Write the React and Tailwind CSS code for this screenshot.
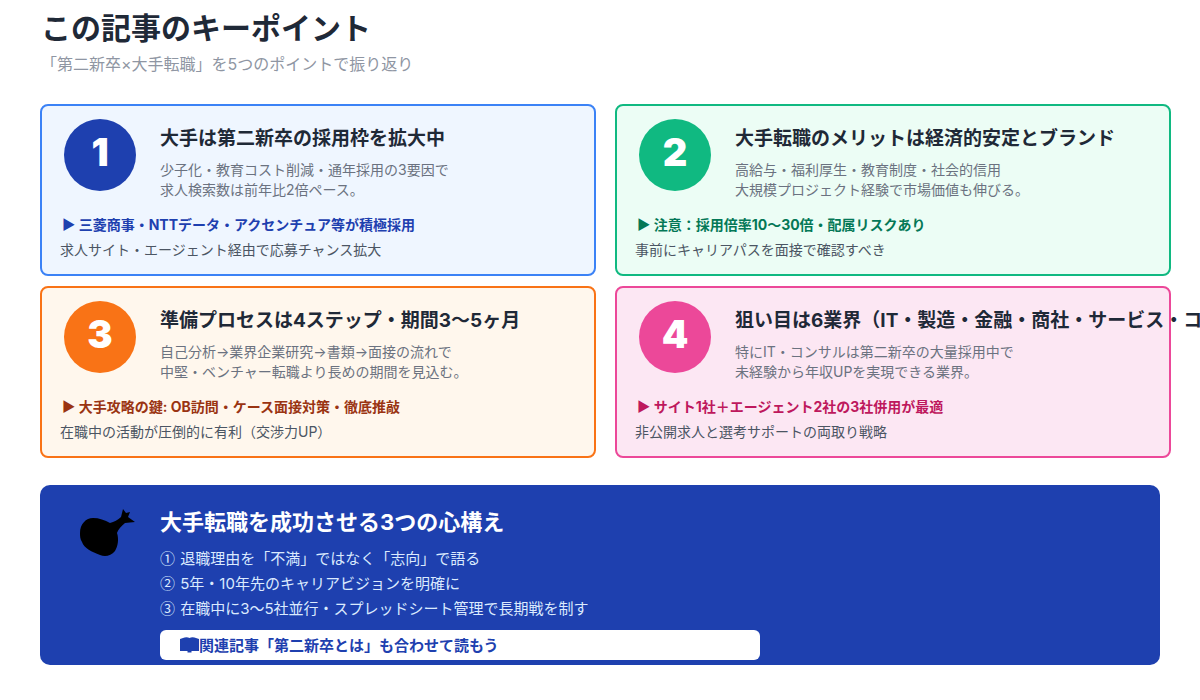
const font = { fontFamily: '"Inter", "Noto Sans CJK JP", sans-serif' };
const cjk = { fontFamily: '"Noto Sans CJK JP", sans-serif' };

const cards = [
  {
    n: "1",
    wrap: "border-[#3b82f6] bg-[#eff6ff]",
    circle: "bg-[#1e40af]",
    hl: "text-[#1e40af]",
    title: "大手は第二新卒の採用枠を拡大中",
    d1: "少子化・教育コスト削減・通年採用の3要因で",
    d2: "求人検索数は前年比2倍ペース。",
    h: "▶ 三菱商事・NTTデータ・アクセンチュア等が積極採用",
    note: "求人サイト・エージェント経由で応募チャンス拡大",
  },
  {
    n: "2",
    wrap: "border-[#10b981] bg-[#ecfdf5]",
    circle: "bg-[#10b981]",
    hl: "text-[#047857]",
    title: "大手転職のメリットは経済的安定とブランド",
    d1: "高給与・福利厚生・教育制度・社会的信用",
    d2: "大規模プロジェクト経験で市場価値も伸びる。",
    h: "▶ 注意：採用倍率10〜30倍・配属リスクあり",
    note: "事前にキャリアパスを面接で確認すべき",
  },
  {
    n: "3",
    wrap: "border-[#f97316] bg-[#fff7ed]",
    circle: "bg-[#f97316]",
    hl: "text-[#9a3412]",
    title: "準備プロセスは4ステップ・期間3〜5ヶ月",
    d1: "自己分析→業界企業研究→書類→面接の流れで",
    d2: "中堅・ベンチャー転職より長めの期間を見込む。",
    h: "▶ 大手攻略の鍵: OB訪問・ケース面接対策・徹底推敲",
    note: "在職中の活動が圧倒的に有利（交渉力UP）",
  },
  {
    n: "4",
    wrap: "border-[#ec4899] bg-[#fce7f3]",
    circle: "bg-[#ec4899]",
    hl: "text-[#be185d]",
    title: "狙い目は6業界（IT・製造・金融・商社・サービス・コンサル）",
    d1: "特にIT・コンサルは第二新卒の大量採用中で",
    d2: "未経験から年収UPを実現できる業界。",
    h: "▶ サイト1社＋エージェント2社の3社併用が最適",
    note: "非公開求人と選考サポートの両取り戦略",
  },
];

function Card({ c }) {
  return (
    <div className={`h-[172px] rounded-lg border-2 pl-[18px] pt-[13px] ${c.wrap}`}>
      <div className="flex">
        <div
          className={`ml-[4px] flex h-[72px] w-[72px] shrink-0 items-center justify-center rounded-full pb-[6px] text-[38px] font-black leading-none text-white ${c.circle}`}
        >
          {c.n}
        </div>
        <div className="ml-[24px] min-w-0">
          <div className="mt-[7px] whitespace-nowrap text-[19px] font-bold leading-[26px] text-[#1f2937]">
            {c.title}
          </div>
          <div className="mt-[8px] whitespace-nowrap text-[14px] leading-[20px] text-[#6b7280]">
            <div>{c.d1}</div>
            <div>{c.d2}</div>
          </div>
        </div>
      </div>
      <div className={`ml-[2px] mt-[15px] whitespace-nowrap text-[14px] font-bold leading-[20px] ${c.hl}`}>
        {c.h}
      </div>
      <div className="mt-[5px] whitespace-nowrap text-[14px] leading-[20px] text-[#4b5563]">{c.note}</div>
    </div>
  );
}

function Bomb() {
  return (
    <svg width="58" height="50" viewBox="0 0 58 50" className="mt-[1px] shrink-0">
      <path
        d="M0 24C0 15 6 9 13 9C19 9 25 11 30 14C34 13 38 11 41 8L43 0L46 4L50 3L48 8L55 13L45 14C41 17 38 21 37 24C39 30 38 37 35 42C31 47 25 48 20 46C12 43 4 39 2 33C0 30 0 27 0 24Z"
        fill="#000"
      />
    </svg>
  );
}

export default function App() {
  return (
    <div className="h-[700px] w-[1200px] overflow-hidden bg-white pl-[40px]" style={font}>
      <h1 className="pl-[1px] pt-[8px] text-[30px] font-bold leading-[40px] text-[#1f2937]">この記事のキーポイント</h1>
      <p className="mt-[5px] pl-[1px] text-[16px] leading-[22px] text-[#8f96a3]">「第二新卒×大手転職」を5つのポイントで振り返り</p>
      <div className="mt-[29px] grid w-[1131px] grid-cols-[556px_556px] gap-x-[19px] gap-y-[10px]">
        {cards.map((c) => (
          <Card key={c.n} c={c} />
        ))}
      </div>
      <div className="mt-[27px] flex h-[180px] w-[1120px] rounded-[10px] bg-[#1e40af] pl-[40px] pt-[23px]">
        <div className="w-[80px] shrink-0">
          <Bomb />
        </div>
        <div className="min-w-0">
          <div className="text-[22px] font-bold leading-[28px] text-white">大手転職を成功させる3つの心構え</div>
          <div className="mt-[10px] text-[15px] leading-[25px] text-[#dbeafe]">
            <div><span className="mr-[1px] leading-none" style={cjk}>①</span> 退職理由を「不満」ではなく「志向」で語る</div>
            <div><span className="mr-[1px] leading-none" style={cjk}>②</span> 5年・10年先のキャリアビジョンを明確に</div>
            <div><span className="mr-[1px] leading-none" style={cjk}>③</span> 在職中に3〜5社並行・スプレッドシート管理で長期戦を制す</div>
          </div>
          <div className="mt-[9px] flex h-[30px] w-[600px] items-center rounded-[6px] bg-white pl-[20px] pt-[3px] text-[15px] font-bold text-[#1e40af]">
            <svg width="19" height="16" viewBox="0 0 19 16" className="mb-[4px] shrink-0">
              <path d="M0 2L3 1C5 0 8 0 9.5 1C11 0 14 0 16 1L19 2V14H11.5V15.5H7.5V14H0Z" fill="#1e40af" />
            </svg>
            関連記事「第二新卒とは」も合わせて読もう
          </div>
        </div>
      </div>
    </div>
  );
}
